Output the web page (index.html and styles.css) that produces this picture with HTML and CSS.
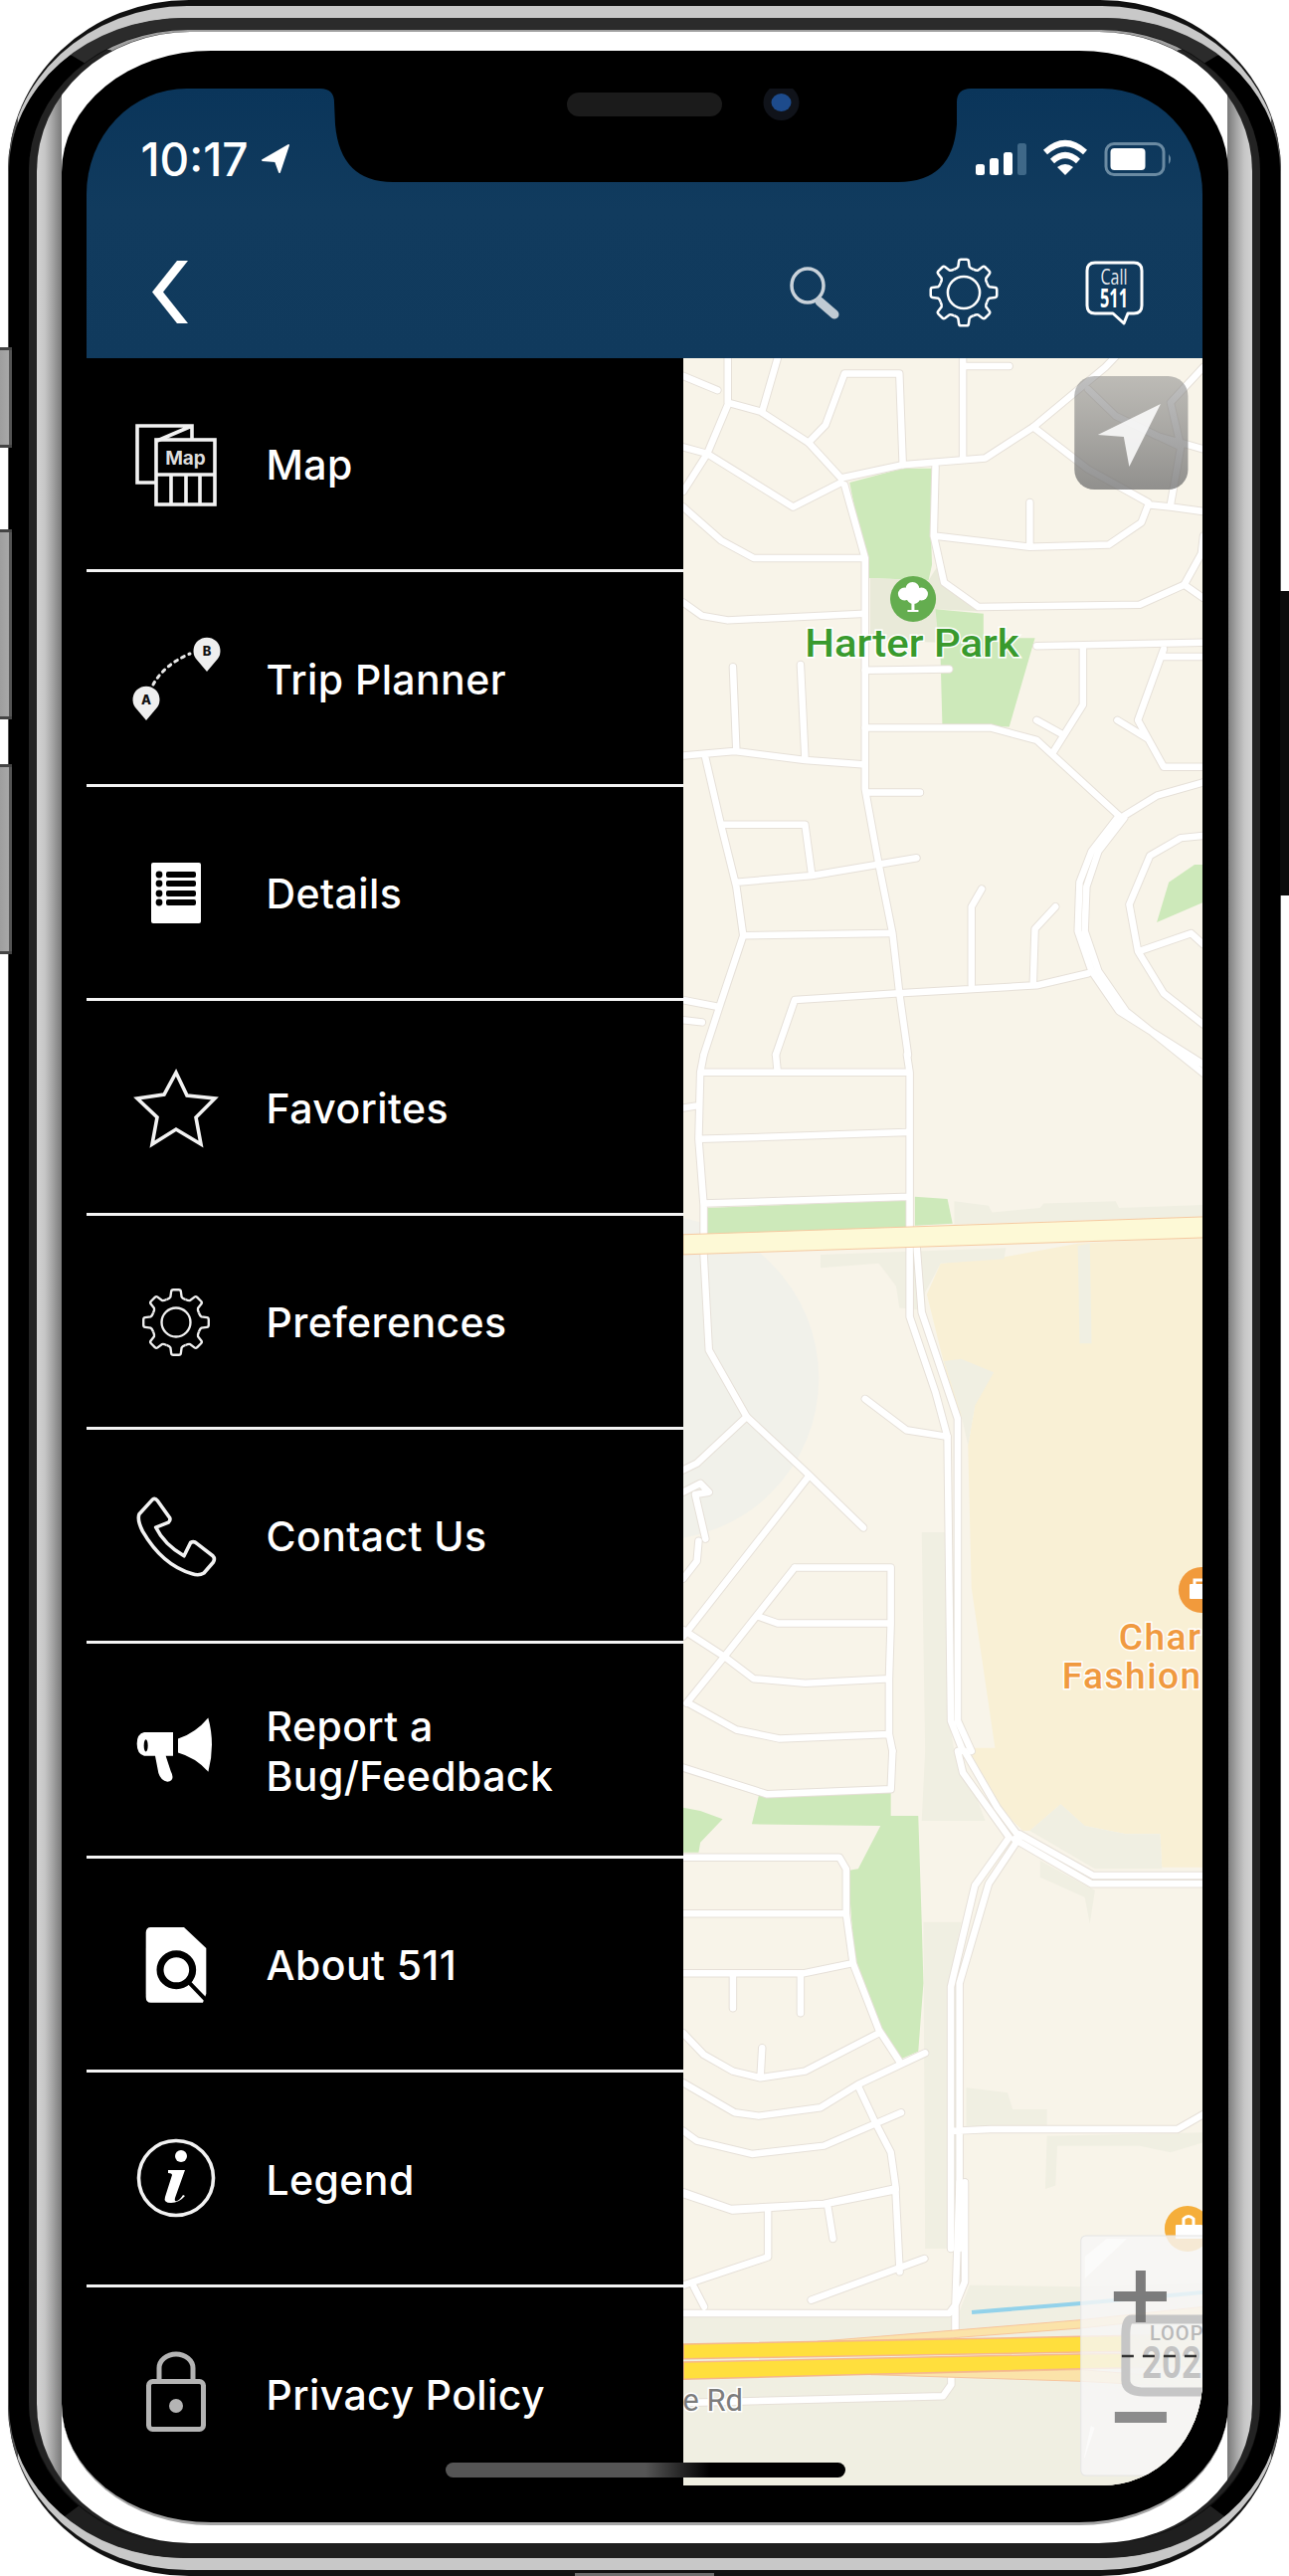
FILE: index.html
```html
<!DOCTYPE html>
<html lang="en">
<head>
<meta charset="utf-8">
<title>511 menu</title>
<link rel="stylesheet" href="styles.css">
</head>
<body>
<div class="device">
  <span class="side-btn btn-a"></span>
  <span class="side-btn btn-b"></span>
  <span class="side-btn btn-c"></span>
  <span class="side-right"></span>
  <span class="bottom-tab"></span>
  <div class="shell">
    <div class="rim">
      <div class="band">
        <div class="ring">
          <div class="chrome">
            <div class="bezel">
              <div class="screen">
                <header class="topbar">
                  <div class="status">
                    <div class="clock">
                      <span class="time">10:17</span>
                      <svg class="loc" viewBox="262 143 34 34"><path class="fill-white rounded" d="M292 146L266 161L279 162L283 173Z"/></svg>
                    </div>
                    <svg class="status-icons" viewBox="978 140 202 40">
                      <rect class="fill-white" x="980" y="165" width="9" height="11" rx="2.5"/>
                      <rect class="fill-white" x="994" y="159" width="9" height="17" rx="2.5"/>
                      <rect class="fill-white" x="1008" y="153" width="9" height="23" rx="2.5"/>
                      <rect class="sig-off" x="1022" y="144" width="9" height="32" rx="2.5"/>
                      <path class="wifi" d="M1050 153Q1070 135 1090 153"/>
                      <path class="wifi" d="M1057 162Q1070 150 1083 162"/>
                      <path class="fill-white" d="M1070 176L1062 168Q1070 162 1078 168Z"/>
                      <rect class="batt" x="1111" y="144.500" width="58" height="31" rx="8"/>
                      <rect class="fill-white" x="1115.500" y="149" width="35" height="22" rx="4"/>
                      <path class="batt-nub" d="M1174 155Q1178 160 1174 165Z"/>
                    </svg>
                  </div>
                  <nav class="nav">
                    <svg class="nav-back" viewBox="150 258 42 72"><path class="fill-white" d="M178 262H189L164 293.500L189 325H178L153 293.500Z"/></svg>
                    <div class="nav-actions">
                      <svg class="nav-search" viewBox="790 258 58 72">
                        <ellipse class="search-ring" cx="811" cy="287" rx="16" ry="17"/>
                        <path class="search-handle" d="M823 303L838 316"/>
                      </svg>
                      <svg class="nav-gear" viewBox="932 258 72 72">
                        <g transform="translate(968 294) scale(.7)">
                          <g class="gear-stroke">
                            <use href="#tooth"/><use href="#tooth" transform="rotate(45)"/><use href="#tooth" transform="rotate(90)"/><use href="#tooth" transform="rotate(135)"/>
                            <use href="#tooth" transform="rotate(180)"/><use href="#tooth" transform="rotate(225)"/><use href="#tooth" transform="rotate(270)"/><use href="#tooth" transform="rotate(315)"/>
                            <circle r="23"/>
                          </g>
                        </g>
                      </svg>
                      <svg class="nav-call" viewBox="1088 258 62 72">
                        <path class="call-box" d="M1100 264H1139Q1147 264 1147 272V307Q1147 315 1139 315H1133L1129 325L1118 315H1100Q1092 315 1092 307V272Q1092 264 1100 264Z"/>
                        <text class="call-small" x="1119" y="286" textLength="27" lengthAdjust="spacingAndGlyphs">Call</text>
                        <text class="call-big" x="1119" y="309" textLength="28" lengthAdjust="spacingAndGlyphs">511</text>
                      </svg>
                    </div>
                  </nav>
                </header>

                <div class="content">
                  <ul class="drawer">
                    <li class="menu-row">
                      <svg class="menu-icon" viewBox="117 406 120 120">
                        <g class="line-3">
                          <path d="M156 485H138V428H193V441M158 443L193 428"/>
                          <rect x="157" y="442" width="59" height="65"/>
                          <path d="M157 477H216M172 477V507M187 477V507M201 477V507"/>
                        </g>
                        <text class="map-word" x="186.500" y="467">Map</text>
                      </svg>
                      <span class="menu-label">Map</span>
                    </li>
                    <li class="menu-row">
                      <svg class="menu-icon" viewBox="117 622 120 120">
                        <path class="trip-dots" d="M154 688Q165 668 191 657"/>
                        <path class="pin" d="M147 724L136 711A13.500 13.500 0 1 1 158 711Z"/>
                        <path class="pin" d="M208 675L197 662A13.500 13.500 0 1 1 219 662Z"/>
                        <text class="pin-word" x="147" y="708">A</text>
                        <text class="pin-word" x="208" y="659">B</text>
                      </svg>
                      <span class="menu-label">Trip Planner</span>
                    </li>
                    <li class="menu-row">
                      <svg class="menu-icon" viewBox="117 837 120 120">
                        <rect class="fill-white" x="152" y="867" width="50" height="61" rx="2"/>
                        <g class="detail-dots">
                          <circle cx="160" cy="879" r="3.400"/><circle cx="160" cy="888" r="3.400"/><circle cx="160" cy="898" r="3.400"/><circle cx="160" cy="907" r="3.400"/>
                          <rect x="167" y="876" width="30" height="6" rx="2"/><rect x="167" y="885" width="30" height="6" rx="2"/><rect x="167" y="895" width="30" height="6" rx="2"/><rect x="167" y="904" width="30" height="6" rx="2"/>
                        </g>
                      </svg>
                      <span class="menu-label">Details</span>
                    </li>
                    <li class="menu-row">
                      <svg class="menu-icon" viewBox="117 1052 120 120">
                        <path class="line-3 miter" d="M177 1078L188 1101L216 1104L197 1123L202 1150L177 1135L153 1150L158 1123L138 1104L165 1100Z"/>
                      </svg>
                      <span class="menu-label">Favorites</span>
                    </li>
                    <li class="menu-row">
                      <svg class="menu-icon" viewBox="117 1268 120 120">
                        <g transform="translate(177 1329) scale(.69)">
                          <g class="gear-stroke thin">
                            <use href="#tooth"/><use href="#tooth" transform="rotate(45)"/><use href="#tooth" transform="rotate(90)"/><use href="#tooth" transform="rotate(135)"/>
                            <use href="#tooth" transform="rotate(180)"/><use href="#tooth" transform="rotate(225)"/><use href="#tooth" transform="rotate(270)"/><use href="#tooth" transform="rotate(315)"/>
                            <circle r="21"/>
                          </g>
                        </g>
                      </svg>
                      <span class="menu-label">Preferences</span>
                    </li>
                    <li class="menu-row">
                      <svg class="menu-icon" viewBox="117 1483 120 120">
                        <g transform="translate(100 1470) scale(.3333 .3827)">
                          <path class="line-3 ns" d="M120 135L160 97Q168 92 175 100L212 145Q215 152 208 157L170 170Q195 215 255 245L275 210Q285 205 293 212L342 245Q350 252 343 262L315 290Q300 298 280 292Q190 270 130 180Q113 150 120 135Z"/>
                        </g>
                      </svg>
                      <span class="menu-label">Contact Us</span>
                    </li>
                    <li class="menu-row">
                      <svg class="menu-icon" viewBox="117 1699 120 120">
                        <g transform="translate(100 1470) scale(.3333 .3827)">
                          <path class="fill-white" d="M237 725Q290 710 328 670Q350 740 328 812Q290 775 237 762Z"/>
                          <path class="fill-white" d="M135 708H222V770H200L215 810Q230 835 205 838Q185 835 178 815L168 770H135Q113 765 113 738Q113 712 135 708Z"/>
                          <ellipse class="fill-black" cx="140" cy="743" rx="6" ry="16"/>
                        </g>
                      </svg>
                      <span class="menu-label">Report a<br>Bug/Feedback</span>
                    </li>
                    <li class="menu-row">
                      <svg class="menu-icon" viewBox="117 1914 120 120">
                        <g transform="translate(100 1470) scale(.3333 .3827)">
                          <path class="fill-white" d="M155 1220H255L322 1275V1395L312 1418H155Q140 1418 140 1403V1235Q140 1220 155 1220Z"/>
                          <ellipse class="about-lens" cx="232" cy="1332" rx="49" ry="42"/>
                          <path class="about-handle" d="M270 1365L322 1412"/>
                        </g>
                      </svg>
                      <span class="menu-label">About 511</span>
                    </li>
                    <li class="menu-row">
                      <svg class="menu-icon" viewBox="117 2130 120 120">
                        <circle class="line-3" cx="177" cy="2190" r="37.500"/>
                        <circle class="fill-white" cx="182" cy="2168" r="6"/>
                        <path class="fill-white" d="M169 2182H186L176 2210Q175 2214 178 2213Q181 2212 184 2207L186 2208Q180 2215 172 2215Q164 2215 166 2209L173 2187Q173 2185 169 2185Z"/>
                      </svg>
                      <span class="menu-label">Legend</span>
                    </li>
                    <li class="menu-row">
                      <svg class="menu-icon" viewBox="117 2345 120 120">
                        <rect class="lock" x="149.500" y="2392.500" width="55" height="48" rx="4"/>
                        <path class="lock" d="M160 2391V2379A17 14 0 0 1 194 2379V2391"/>
                        <circle class="lock-dot" cx="177" cy="2417" r="7"/>
                      </svg>
                      <span class="menu-label">Privacy Policy</span>
                    </li>
                  </ul>

                  <svg class="map" viewBox="687 360 521 2138" preserveAspectRatio="none">
                    <defs>
                      <linearGradient id="locate-grad" x1="0" y1="0" x2="0" y2="1">
                        <stop class="locate-top" offset="0"/>
                        <stop class="locate-bottom" offset="1"/>
                      </linearGradient>
                      <g id="tooth">
                        <path d="M-13.780 -33.260Q-9 -35 -8.100 -37L-7 -45Q-6.700 -47.500 -4 -47.500H4Q6.700 -47.500 7 -45L8.100 -37Q9 -35 13.780 -33.260"/>
                      </g>
                      <g id="roads">
                        <g transform="translate(680 360) scale(.3444 .4464)">
                          <path d="M20 40L120 72M150 0V100M150 100L245 120L385 190L480 270L660 240L900 225L1040 155L1250 20L1300 -20M295 0L250 120M150 105L90 215L20 300M20 200L90 215L340 335L480 280"/>
                          <path d="M385 190L435 150L490 35H650L660 240M835 0V225M835 18H970M20 335L130 410L225 450H550M490 285L550 450V970L590 1140L630 1295L650 1430L675 1568"/>
                          <path d="M20 550L75 580L150 590L550 575M755 245L750 400L780 505L880 560L1350 555L1480 510L1536 540M750 400L1030 425L1260 420L1355 370L1375 330L1440 335L1536 345M1030 325V425M1040 155L1200 250L1375 325"/>
                          <path d="M1200 70L1280 130L1470 200L1440 330M1280 130L1400 175L1536 205M1470 200L1440 100L1536 20M1536 400L1530 440L1480 510M1050 648L1536 640M1185 648V780L1100 885M1420 655L1345 815L1420 920L1536 920M1420 672H1536M1050 815L1120 845M1285 815L1370 855"/>
                          <path d="M550 703L795 700M165 695L175 885M362 690L375 900M20 895L170 885L375 905L550 915M550 832H915L1050 860L1290 1030M85 900L130 1050L175 1190L195 1300L130 1450L80 1568M130 1050L375 1050L395 1165M175 1180L395 1165L700 1125M195 1300L620 1295M560 978H710"/>
                          <path d="M860 1410V1235L890 1195M1040 1405L1045 1285L1105 1235M290 1568L345 1445L650 1430L1050 1412L1200 1385M20 1445L120 1460M20 1490L75 1495"/>
                          <path d="M1290 1030L1210 1110L1175 1180L1170 1290L1210 1380L1290 1470L1536 1590M1305 1035L1230 1110L1195 1190L1190 1290L1230 1380L1310 1470L1536 1610M1305 1030L1400 985L1536 955M1536 1075L1470 1080L1380 1120L1320 1230L1345 1335L1420 1430L1536 1500M1350 1335L1500 1295L1536 1320"/>
                        </g>
                        <g transform="translate(680 1060) scale(.3444 .4464)">
                          <path d="M80 0L70 40L65 190L80 340L80 450L95 665L205 815L385 945L545 1065M672 0L680 40V320V590L755 760L790 860L800 1500L835 1568M700 430L715 580L820 820V1500L860 1568M290 0L295 40M70 40H680M20 120L60 115M70 190L670 175M80 335L680 320"/>
                          <path d="M550 775L670 845L790 860M205 815L60 920L20 935M20 985L70 965L95 985L55 990L85 1090M65 1095L60 1140L20 1180M385 950L20 1310M345 1155H625V1280L620 1405V1530L630 1568M345 1155L140 1355L30 1460M240 1265L295 1280H625M20 1295L140 1355L225 1405L375 1415L620 1405M35 1460L175 1520L300 1540L620 1530"/>
                        </g>
                        <g transform="translate(680 1760) scale(.3444 .3333)">
                          <path d="M20 50L265 130L625 115L630 0M20 320H475L495 355V490L515 640L590 840L650 935M20 490H490M20 670H370L510 640M165 670V775M362 670V790M20 850L80 915L165 965L245 985L375 965L590 850M250 895L245 985"/>
                          <path d="M20 1000L170 1090L240 1100L420 1075L530 1005L725 910M530 1010L580 1120L625 1210L640 1320M20 1145L60 1175L220 1215L430 1190L655 1090M20 1335L165 1385L430 1365L630 1320"/>
                          <path d="M820 0L835 65L970 260L870 405L800 710V1500M840 0L935 170L1000 260L910 400L825 700V1500M1000 250L1215 375H1536M985 265L1210 400H1536M810 1145L915 1140H1460L1536 1095"/>
                        </g>
                        <g transform="translate(648 2200) scale(.4132 .3333)">
                          <path d="M95 10L210 60L440 45L605 5M300 65V205L95 290M445 50L458 150M610 5L620 250M405 335L680 210M120 295L145 355M95 375H740L755 350L765 -20M778 -20V280L755 350V450M95 645L725 625L745 590V550"/>
                        </g>
                      </g>
                    </defs>

                    <rect class="m-land" x="687" y="360" width="521" height="2138"/>
                    <circle class="m-circle" cx="660" cy="1385" r="163"/>

                    <g transform="translate(680 1060) scale(.3444 .4464)">
                      <path class="m-mall" d="M730 540L770 470L960 455L1170 425L1536 410V1568H930L860 1200L850 880L870 790L820 820Z"/>
                      <path class="m-pale" d="M810 330L910 340L920 355L1060 345L1070 335L1280 330L1290 345L1536 338V365L810 382Z"/>
                      <path class="m-pale" d="M420 450L960 435L955 460L770 470L725 535L720 575L650 570L640 520L590 470L420 480Z"/>
                      <path class="m-pale" d="M1170 430L1205 425L1210 650L1175 650Z"/>
                      <path class="m-pale" d="M780 690L830 685L925 715L870 790L850 880L830 810Z"/>
                      <path class="m-pale" d="M715 1075H785L795 1500L810 1568H725Z"/>
                    </g>
                    <g transform="translate(680 1760) scale(.3444 .3333)">
                      <path class="m-mall" d="M850 -10L1536 -10V350H1415L1410 250L1310 250L1190 225L1120 160L1030 240L1010 240L940 170Z"/>
                      <path class="m-pale" d="M1030 240L1120 160L1190 225L1310 250H1410L1415 355H1220Z"/>
                      <path class="m-pale" d="M725 0H825L900 210L715 210Z"/>
                      <path class="m-pale" d="M720 515H830L795 700V1500H725Z"/>
                      <path class="m-pale" d="M845 1015L965 1030L980 1080H1080V1130H845Z"/>
                      <path class="m-pale" d="M1080 1160L1536 1150V1180L1440 1210L1350 1190H1110L1105 1310L1075 1320Z"/>
                      <path class="m-pale" d="M1060 330L1220 420L1205 520L1190 440L1060 380Z"/>
                      <path class="m-park" d="M240 135L625 125V195H705L715 515L720 700L705 905L650 930L590 840L520 640L500 360L530 355L595 225L220 220Z"/>
                      <path class="m-park" d="M20 170L70 180L135 205L70 275L65 305H20Z"/>
                    </g>
                    <g transform="translate(680 360) scale(.3444 .4464)">
                      <path class="m-park" d="M505 280L660 248H745L742 400L745 465L735 500L560 495Z"/>
                      <path class="m-park-pale" d="M565 495L735 500L760 470L780 510L880 570L760 565L770 640L565 635Z"/>
                      <path class="m-park" d="M755 565L895 575V630H1045L970 830L775 825L770 680Z"/>
                      <path class="m-park" d="M1400 1270L1435 1180L1510 1140H1536V1225Z"/>
                    </g>
                    <g transform="translate(680 1060) scale(.3444 .4464)">
                      <path class="m-park" d="M88 345L670 328V395L88 410Z"/>
                      <path class="m-park" d="M695 320L790 325L805 380L695 385Z"/>
                    </g>
                    <g transform="translate(648 2200) scale(.4132 .3333)">
                      <path class="m-pale" d="M95 385H760L790 290L1060 295L1357 285V900H95Z"/>
                    </g>

                    <use href="#roads" class="road-casing"/>
                    <use href="#roads" class="road-fill"/>

                    <g transform="translate(680 1060) scale(.3444 .4464)">
                      <path class="m-artery" d="M20 405L1536 365V412L20 450Z"/>
                    </g>
                    <g transform="translate(648 2200) scale(.4132 .3333)">
                      <path class="m-blue" d="M795 372L1060 345L1357 312"/>
                      <path class="m-ramp" d="M420 460L1060 395L1357 355V380L1060 420L740 450Z"/>
                      <path class="m-ramp" d="M550 560L1060 580L1357 600V575L1060 545Z"/>
                      <path class="m-freeway" d="M95 468L1060 445L1357 438V486L1060 492L95 512Z"/>
                      <path class="m-freeway" d="M95 522L1060 498L1357 492V535L1060 542L95 574Z"/>
                    </g>

                    <circle class="badge-park" cx="917.600" cy="602" r="23"/>
                    <g class="fill-white">
                      <circle cx="909" cy="597" r="6.500"/><circle cx="917" cy="592" r="7"/><circle cx="926" cy="597" r="6.500"/><circle cx="918" cy="600" r="7"/>
                      <path d="M916 603H919V613H923V615H912V613H916Z"/>
                    </g>
                    <text class="lbl-park" x="809" y="660" textLength="215" lengthAdjust="spacingAndGlyphs">Harter Park</text>

                    <circle class="badge-shop" cx="1207" cy="1598" r="23"/>
                    <rect class="fill-white" x="1195" y="1592" width="18" height="15" rx="1"/>
                    <path class="bag-handle" d="M1200 1592V1588H1210V1592"/>
                    <text class="lbl-shop" x="1124" y="1658">Char</text>
                    <text class="lbl-shop" x="1067" y="1697">Fashion</text>

                    <circle class="badge-mall" cx="1193" cy="2240" r="23"/>
                    <rect class="fill-white" x="1181" y="2236" width="27" height="14" rx="1"/>
                    <path class="bag-handle" d="M1189 2236V2230Q1194 2225 1199 2230V2236"/>

                    <text class="lbl-road" x="747" y="2423">e Rd</text>

                    <rect class="locate-btn" x="1079.500" y="378" width="114" height="114" rx="20"/>
                    <path class="locate-arrow" d="M1166 406L1103 437L1129 439L1134.500 469Z"/>

                    <rect class="zoom-panel" x="1086" y="2247" width="130" height="241" rx="5"/>
                    <path class="zoom-shine" d="M1090 2290L1132 2250H1112L1090 2268ZM1090 2470L1100 2440L1096 2438L1089 2470Z"/>
                    <path class="shield" d="M1137 2331H1216V2404H1150Q1131 2404 1131 2392V2346Q1131 2331 1137 2331Z"/>
                    <text class="shield-loop" x="1155" y="2352">LOOP</text>
                    <text class="shield-num" x="1147" y="2390" textLength="60" lengthAdjust="spacingAndGlyphs">202</text>
                    <path class="shield-dash" d="M1127 2368H1203"/>
                    <path class="zoom-plus" d="M1119 2303H1172V2313H1119ZM1141 2282H1151V2334H1141Z"/>
                    <rect class="zoom-minus" x="1120" y="2424" width="52" height="11"/>
                  </svg>
                </div>

                <svg class="notch" viewBox="320 89 660 96">
                  <path class="fill-black" d="M322 89Q336 89 336 103L337 125Q342 183 395 183H903Q958 183 962 125V103Q962 89 976 89Z"/>
                  <rect class="speaker" x="570" y="93" width="156" height="24" rx="12"/>
                  <circle class="cam-outer" cx="785.500" cy="103" r="18"/>
                  <ellipse class="cam-lens" cx="785.500" cy="103" rx="10" ry="9"/>
                </svg>
                <span class="home-bar"></span>
              </div>
            </div>
          </div>
        </div>
      </div>
    </div>
  </div>
</div>
</body>
</html>
```

FILE: styles.css
```css
* { box-sizing: border-box; }
html, body { margin: 0; padding: 0; background: #fff; }
body { width: 1296px; height: 2589px; overflow: hidden; padding: 0 8px; }

.device { position: relative; width: 1280px; height: 2589px; }

/* Stacked rings of the phone body: unequal border widths give the tapered crescents */
.shell { height: 100%; padding: 6px 0; background: #111; border-radius: 182px / 172px; }
.rim { height: 100%; border-style: solid; border-width: 12px 1.5px; border-color: #c8c8c8 #555; border-radius: 180px / 166px; }
.band { height: 100%; border-style: solid; border-width: 12px 20.5px 15px; border-color: #2b2b2b #000 #1f1f1f; border-radius: 176px / 155px; }
.ring { height: 100%; border-style: solid; border-width: 2px 8px 0; border-color: #a0a0a0 #232323; border-radius: 160px / 142px; }
.chrome {
  height: 100%;
  padding: 19px 24.5px 18px;
  border-radius: 154px / 140px;
  background: linear-gradient(90deg, #d2d2d2 0, #c6c6c6 8px, #a8a8a8 15px, #7c7c7c 24.5px, #fff 24.5px, #fff calc(100% - 24.5px), #7c7c7c calc(100% - 24.5px), #a8a8a8 calc(100% - 15px), #c6c6c6 calc(100% - 8px), #d2d2d2 100%);
}
.bezel {
  height: 100%;
  padding: 38px 25.5px 37px;
  background: #000;
  border-bottom: 3px solid #a5a5a5;
  border-radius: 150px / 122px;
}
.screen {
  position: relative;
  display: flex;
  flex-direction: column;
  height: 100%;
  overflow: hidden;
  background: #000;
  border-radius: 101px / 106px;
}

.side-btn { position: absolute; left: -8px; width: 12px; background: linear-gradient(90deg, #9e9e9e 0, #a8a8a8 9px, #555 9px); border-top: 3px solid #444; border-bottom: 3px solid #444; }
.btn-a { top: 349px; height: 101px; }
.btn-b { top: 532px; height: 191px; }
.btn-c { top: 768px; height: 191px; }
.side-right { position: absolute; right: -8px; top: 594px; width: 9px; height: 306px; background: #0b0b0b; }
.bottom-tab { position: absolute; left: 570px; bottom: 0; width: 140px; height: 3px; background: #6e6e6e; }

/* Top bar */
.topbar { flex: none; height: 271px; background: linear-gradient(180deg, #0a355a 0, #113b5e 45%, #103a5d 100%); }
.status { display: flex; justify-content: space-between; align-items: flex-start; height: 94px; padding: 51px 28px 0 54.5px; }
.clock { display: flex; align-items: center; gap: 10px; }
.time { font: 500 46px/40px Inter, "Liberation Sans", sans-serif; color: #fff; }
.loc { display: block; width: 34px; height: 34px; }
.status-icons { display: block; width: 202px; height: 40px; }

.nav { display: flex; justify-content: space-between; height: 177px; padding: 75px 58px 0 62.5px; }
.nav-actions { display: flex; gap: 84px; }
.nav-back { display: block; width: 42px; height: 72px; }
.nav-search { display: block; width: 58px; height: 72px; }
.nav-gear { display: block; width: 72px; height: 72px; }
.nav-call { display: block; width: 62px; height: 72px; }

.content { flex: 1; display: flex; min-height: 0; }

/* Drawer */
.drawer { flex: none; width: 600px; margin: 0; padding: 0; list-style: none; background: #000; }
.menu-row { display: flex; align-items: center; gap: 31px; height: 215.4px; padding-left: 29.5px; border-bottom: 3px solid #f4f4f4; }
.menu-row:last-child { border-bottom: 0; }
.menu-icon { display: block; flex: none; width: 120px; height: 120px; }
.menu-label { padding-top: 4px; font: 500 41px/49.5px Inter, "Liberation Sans", sans-serif; letter-spacing: .4px; color: #fff; }

/* Shared icon paints */
.fill-white { fill: #fff; }
.fill-black { fill: #000; }
.rounded { stroke: #fff; stroke-width: 2; stroke-linejoin: round; }
.line-3, .line-3 path, .line-3 rect { fill: none; stroke: #f2f2f2; stroke-width: 3.6; }
.line-3.ns { vector-effect: non-scaling-stroke; stroke-linejoin: round; }
.miter { stroke-linejoin: miter; }
.sig-off { fill: #3f6888; }
.wifi { fill: none; stroke: #fff; stroke-width: 6; }
.batt { fill: none; stroke: #6a8aa2; stroke-width: 3; }
.batt-nub { fill: #6a8aa2; }
.search-ring { fill: none; stroke: #c9d2da; stroke-width: 3.5; }
.search-handle { fill: none; stroke: #c0cbd4; stroke-width: 9; stroke-linecap: round; }
.gear-stroke { fill: none; stroke: #fff; stroke-width: 3.6; }
.gear-stroke.thin { stroke: #efefef; stroke-width: 3.4; }
.call-box { fill: none; stroke: #fff; stroke-width: 3; stroke-linejoin: round; }
.call-small { font: 400 21px "Open Sans", sans-serif; text-anchor: middle; fill: #e5e9ee; }
.call-big { font: 700 26px "Open Sans", sans-serif; text-anchor: middle; fill: #fff; }

.map-word { font: 700 19px Inter, sans-serif; text-anchor: middle; fill: #dcdcdc; }
.pin { fill: #efefef; }
.pin-word { font: 800 13px Inter, sans-serif; text-anchor: middle; fill: #111; }
.trip-dots { fill: none; stroke: #e8e8e8; stroke-width: 3; stroke-dasharray: 3 5; stroke-linecap: round; }
.detail-dots { fill: #000; }
.about-lens { fill: #fff; stroke: #000; stroke-width: 7; vector-effect: non-scaling-stroke; }
.about-handle { fill: none; stroke: #000; stroke-width: 4; vector-effect: non-scaling-stroke; }
.lock { fill: none; stroke: #b4b4b4; stroke-width: 5; }
.lock-dot { fill: #b4b4b4; }

/* Map */
.map { flex: 1; display: block; min-width: 0; height: 100%; background: #f8f4e9; }
.m-land { fill: #f8f4e9; }
.m-circle { fill: #f1f1ea; }
.m-mall { fill: #f9f0d5; }
.m-pale { fill: #f0efe2; }
.m-park { fill: #cde9ba; }
.m-park-pale { fill: #e9ead9; }
#roads path { fill: none; stroke-linejoin: round; stroke-linecap: round; vector-effect: non-scaling-stroke; }
.road-casing { stroke: #e6e0d8; stroke-width: 8.500; }
.road-fill { stroke: #fff; stroke-width: 6.500; }
.m-artery { fill: #fdf9d6; stroke: #f5c9a0; stroke-width: 1; vector-effect: non-scaling-stroke; }
.m-blue { fill: none; stroke: #93d2ea; stroke-width: 4; vector-effect: non-scaling-stroke; }
.m-ramp { fill: #fbe3a9; stroke: #f6c59c; stroke-width: 1; vector-effect: non-scaling-stroke; }
.m-freeway { fill: #ffdf3d; stroke: #f6b88a; stroke-width: 1.5; vector-effect: non-scaling-stroke; }

.badge-park { fill: #64ad4f; }
.badge-shop { fill: #f19a3c; }
.badge-mall { fill: #f5ae3a; }
.bag-handle { fill: none; stroke: #fff; stroke-width: 3; }
.lbl-park { font: 500 39px Roboto, Inter, sans-serif; fill: #399a2d; stroke: #fff; stroke-width: 3; paint-order: stroke; }
.lbl-shop { font: 500 37px Roboto, Inter, sans-serif; letter-spacing: 1.5px; fill: #f09a40; stroke: #fff; stroke-width: 3; paint-order: stroke; }
.lbl-road { font: 400 31px Roboto, Inter, sans-serif; text-anchor: end; fill: #7d7d7d; stroke: #fff; stroke-width: 3; paint-order: stroke; }
.locate-btn { fill: url(#locate-grad); }
.locate-top { stop-color: #8c8c8c; stop-opacity: .55; }
.locate-bottom { stop-color: #6e6e6e; stop-opacity: .75; }
.locate-arrow { fill: #fff; fill-opacity: .85; }
.zoom-panel { fill: #f6f6f6; fill-opacity: .82; stroke: #e4e4e4; stroke-width: 1; }
.zoom-shine { fill: #fff; fill-opacity: .55; }
.shield { fill: #f3f3f1; fill-opacity: .85; stroke: #c6c6c6; stroke-width: 9; stroke-linejoin: round; }
.shield-loop { font: 500 20px Roboto, sans-serif; letter-spacing: 1px; fill: #b9b9b9; }
.shield-num { font: 700 45px Roboto, sans-serif; fill: #c3c3c3; }
.shield-dash { fill: none; stroke: #333; stroke-width: 2.500; stroke-dasharray: 12 9; }
.zoom-plus { fill: #6f6f6f; fill-opacity: .9; }
.zoom-minus { fill: #8c8c8c; }

/* Overlays on the screen */
.notch { position: absolute; top: 0; left: 232.5px; display: block; width: 660px; height: 96px; }
.speaker { fill: #1b1b1b; }
.cam-outer { fill: #10131a; }
.cam-lens { fill: #1d4b8c; }
.home-bar { position: absolute; left: 360.5px; bottom: 8px; width: 402px; height: 15px; border-radius: 8px; background: linear-gradient(90deg, #555 0, #555 50%, #000 66%); }
```
